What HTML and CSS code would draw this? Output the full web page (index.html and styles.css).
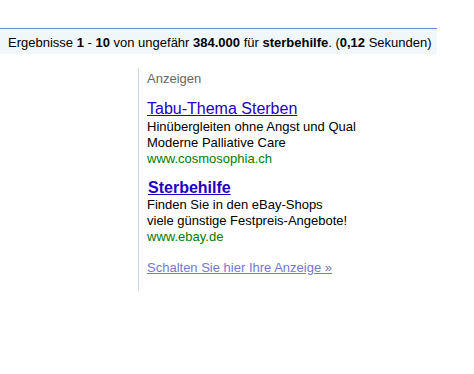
FILE: index.html
```html
<!DOCTYPE html>
<html lang="de">
<head>
    <meta charset="UTF-8">
    <title>sterbehilfe - Suche</title>
    <link rel="stylesheet" href="styles.css">
</head>
<body>
    <div class="resbar">
        Ergebnisse <b>1</b> - <b>10</b> von ungefähr <b>384.000</b> für <b>sterbehilfe</b>. (<b>0,12</b> Sekunden)
    </div>

    <div class="ads">
        <h2 class="ads-label">Anzeigen</h2>

        <div class="ad">
            <a class="ad-title" href="#">Tabu-Thema Sterben</a>
            <div class="ad-text">Hinübergleiten ohne Angst und Qual<br>Moderne Palliative Care</div>
            <cite class="ad-url">www.cosmosophia.ch</cite>
        </div>

        <div class="ad">
            <a class="ad-title bold" href="#">Sterbehilfe</a>
            <div class="ad-text">Finden Sie in den eBay-Shops<br>viele günstige Festpreis-Angebote!</div>
            <cite class="ad-url">www.ebay.de</cite>
        </div>

        <a class="ad-own" href="#">Schalten Sie hier Ihre Anzeige »</a>
    </div>
</body>
</html>
```

FILE: styles.css
```css
* {
    margin: 0;
    padding: 0;
    box-sizing: border-box;
}

body {
    background: #fff;
    color: #000;
    font-family: 'Liberation Sans', Arial, sans-serif;
    font-size: 13px;
    padding-top: 28px;
}

.resbar {
    width: 437px;
    height: 26px;
    background: #f0f7f9;
    border-top: 1px solid #6b90da;
    padding: 6px 0 0 8px;
    line-height: 16px;
    white-space: nowrap;
}

.ads {
    margin: 14px 0 0 138px;
    width: 240px;
    border-left: 1px solid #c9d7f1;
    padding: 3px 0 15px 8px;
}

.ads-label {
    font-size: 13px;
    font-weight: normal;
    color: #676767;
    line-height: 16px;
    margin-bottom: 12px;
}

.ad {
    margin-bottom: 11px;
}

.ad-title {
    display: inline-block;
    font-size: 16px;
    line-height: 20px;
    color: #2200c1;
}

.ad-title.bold {
    font-weight: bold;
    line-height: 19px;
    margin-left: 1px;
}

.ad-text {
    line-height: 16px;
}

.ad-url {
    display: block;
    font-style: normal;
    color: #008000;
    line-height: 16px;
}

.ad-own {
    display: inline-block;
    margin-top: 4px;
    color: #7777cc;
    line-height: 16px;
}
```
